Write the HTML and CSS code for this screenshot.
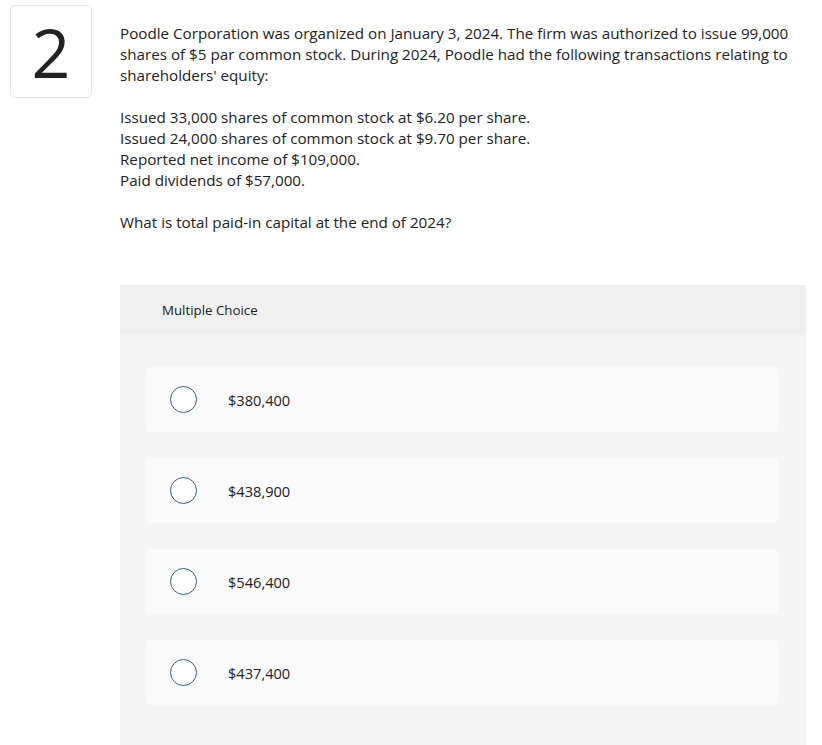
FILE: index.html
```html
<!DOCTYPE html>
<html>
<head>
<meta charset="utf-8">
<link rel="stylesheet" href="styles.css">
</head>
<body>
<div class="page">
  <div class="num">2</div>
  <div class="content">
    <div class="prompt">
      <p>Poodle Corporation was organized on January 3, 2024. The firm was authorized to issue 99,000 shares of $5 par common stock. During 2024, Poodle had the following transactions relating to shareholders' equity:</p>
      <p>Issued 33,000 shares of common stock at $6.20 per share.<br>Issued 24,000 shares of common stock at $9.70 per share.<br>Reported net income of $109,000.<br>Paid dividends of $57,000.</p>
      <p>What is total paid-in capital at the end of 2024?</p>
    </div>
    <div class="panel">
      <div class="panel-head">Multiple Choice</div>
      <div class="choices">
        <div class="choice"><span class="radio"></span><span class="label">$380,400</span></div>
        <div class="choice"><span class="radio"></span><span class="label">$438,900</span></div>
        <div class="choice"><span class="radio"></span><span class="label">$546,400</span></div>
        <div class="choice"><span class="radio"></span><span class="label">$437,400</span></div>
      </div>
    </div>
  </div>
</div>
</body>
</html>
```
FILE: styles.css
```css
html, body { margin: 0; padding: 0; background: #fff; }
body { font-family: "Open Sans", "Lato", sans-serif; color: #222; }
.page { display: flex; padding: 5px 0 0 10px; align-items: flex-start; }
.num {
  width: 80px; height: 91px;
  border: 1px solid #e6e6e6; border-radius: 5px;
  display: flex; align-items: center; justify-content: center;
  font-family: "Open Sans", sans-serif; font-size: 68px; font-weight: 400; color: #222;
  line-height: 1; padding-bottom: 0;
  box-sizing: content-box;
}
.num-inner { display: block; }
.content { margin-left: 28px; flex: 1; }
.prompt { font-size: 15.2px; line-height: 21px; color: #222; padding-right: 20px; }
.prompt p { margin: 0 0 21px 0; }
.prompt p:first-child { margin-top: 18px; }
.panel { margin-top: 52px; width: 686px; background: #f5f5f5; min-height: 470px; }
.panel-head { background: #f0f0f0; height: 50px; display: flex; align-items: center; padding-left: 42px; font-size: 13.3px; color: #222; }
.choices { padding: 32px 28px 0 26px; display: flex; flex-direction: column; gap: 26px; }
.choice { background: #fafafa; border-radius: 4px; height: 65px; display: flex; align-items: center; padding-left: 24px; }
.radio { width: 25px; height: 25px; border: 1.5px solid #2f5f8f; border-radius: 50%; background: #fff; }
.label { margin-left: 31px; font-size: 14.6px; color: #222; }
```
